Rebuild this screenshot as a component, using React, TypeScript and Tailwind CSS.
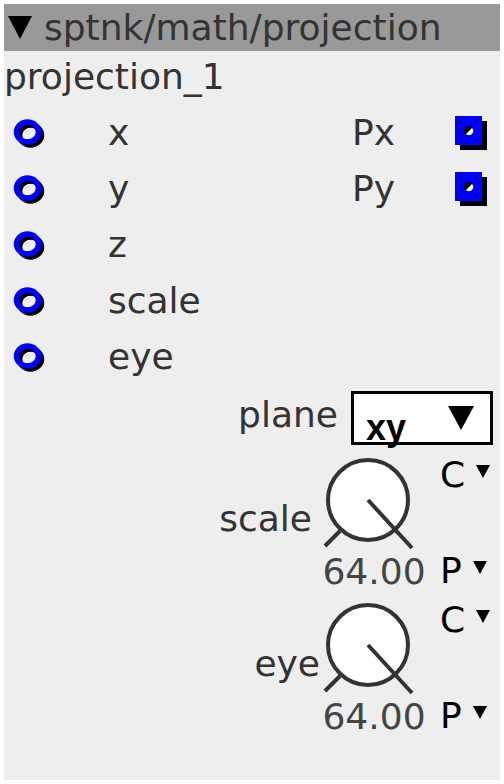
import React from "react";

const dejavu = { fontFamily: '"DejaVu Sans", sans-serif' };

const InPort: React.FC = () => (
  <svg width="36" height="36" viewBox="0 0 36 36">
    <ellipse cx="17.5" cy="17" rx="11" ry="10" fill="none" stroke="#000" strokeWidth="5.5" transform="translate(3 3)" />
    <ellipse cx="17.5" cy="17" rx="11" ry="10" fill="none" stroke="#0000ff" strokeWidth="5.5" />
  </svg>
);

const OutPort: React.FC = () => (
  <svg width="36" height="38" viewBox="0 0 36 38">
    <rect x="6" y="7" width="27" height="29" fill="#000" />
    <rect x="1" y="2" width="27" height="29" fill="#0000ff" />
    <circle cx="7" cy="8" r="1" fill="#000" />
    <circle cx="22" cy="8" r="1" fill="#000" />
    <circle cx="7" cy="26" r="1" fill="#000" />
    <circle cx="22" cy="26" r="1" fill="#000" />
    <circle cx="14.5" cy="17" r="5" fill="#000" />
    <path d="M 12 20 L 18 14 A 3.5 3.5 0 0 1 12 20 Z" fill="#fff" />
  </svg>
);

const Tri: React.FC<{ w: number; h: number }> = ({ w, h }) => (
  <svg width={w} height={h} viewBox={`0 0 ${w} ${h}`}>
    <polygon points={`0,0 ${w},0 ${w / 2},${h}`} fill="#000" />
  </svg>
);

const Knob: React.FC = () => (
  <svg width="94" height="96" viewBox="0 0 94 96">
    <circle cx="46" cy="46" r="40" fill="#fff" stroke="#333" strokeWidth="4" />
    <line x1="46" y1="46" x2="90" y2="94" stroke="#333" strokeWidth="4" />
    <line x1="3" y1="92" x2="18" y2="77" stroke="#333" strokeWidth="4" />
  </svg>
);

const ports = [
  { name: "x", out: "Px" },
  { name: "y", out: "Py" },
  { name: "z" },
  { name: "scale" },
  { name: "eye" },
];

const KnobBlock: React.FC<{ label: string; gap: string }> = ({ label, gap }) => (
  <div className="flex h-[145px] justify-end pr-[10px]">
    <div className={`mt-[56px] text-[36px] leading-none text-[#333] ${gap}`}>{label}</div>
    <div className="flex w-[104px] flex-col">
      <div className="mt-[9px]">
        <Knob />
      </div>
      <div className="mt-[4px] text-center text-[36px] leading-none text-[#444]">64.00</div>
    </div>
    <div className="ml-[14px] flex w-[50px] flex-col text-[36px] leading-none text-black">
      <div className="mt-[12px] flex items-start gap-[11px]">
        <span>C</span>
        <span className="mt-[8px]">
          <Tri w={14} h={13} />
        </span>
      </div>
      <div className="mt-[60px] flex items-start gap-[11px]">
        <span>P</span>
        <span className="mt-[8px]">
          <Tri w={14} h={13} />
        </span>
      </div>
    </div>
  </div>
);

export default function App() {
  return (
    <div className="h-[784px] w-[504px] bg-white p-[4px]" style={dejavu}>
      <div className="flex h-[776px] w-[496px] flex-col bg-[#eeeeee]">
        <div className="flex h-[47px] items-center gap-[12px] bg-[#999999] pl-[4px] text-[36px] leading-none text-[#333]">
          <Tri w={24} h={23} />
          <span>sptnk/math/projection</span>
        </div>
        <div className="flex h-[52px] items-center text-[36px] leading-none text-[#333]">projection_1</div>
        <div className="h-[2px]" />
        {ports.map((p) => (
          <div key={p.name} className="flex h-[56px] items-center text-[36px] leading-none text-[#333]">
            <div className="w-[104px] pl-[6px]">
              <InPort />
            </div>
            <div className="w-[244px]">{p.name}</div>
            <div className="w-[102px]">{p.out ?? ""}</div>
            {p.out && <OutPort />}
          </div>
        ))}
        <div className="flex h-[60px] items-start justify-end pr-[7px]">
          <div className="mt-[12px] mr-[13px] text-[36px] leading-none text-[#333]">plane</div>
          <div className="mt-[6px] flex h-[54px] w-[142px] items-end justify-between border-[3px] border-black bg-white pl-[12px] pr-[16px]">
            <span className="-mb-[4px] text-[36px] font-bold leading-none text-black" style={{ fontFamily: '"Liberation Sans", sans-serif' }}>
              xy
            </span>
            <span className="mb-[12px]">
              <Tri w={26} h={24} />
            </span>
          </div>
        </div>
        <KnobBlock label="scale" gap="mr-[10px]" />
        <KnobBlock label="eye" gap="mr-[2px]" />
      </div>
    </div>
  );
}
